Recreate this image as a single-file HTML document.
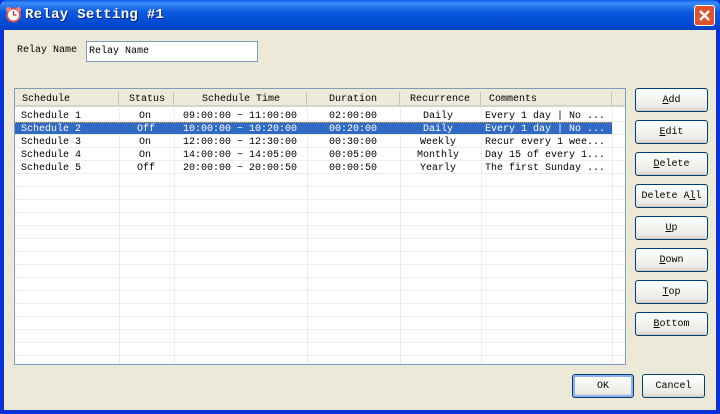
<!DOCTYPE html>
<html><head><style>
*{margin:0;padding:0;box-sizing:border-box}
body{width:720px;height:414px;overflow:hidden;background:#0831d9;font-family:"Liberation Mono",monospace;font-size:10px;color:#000;position:relative}
.title{position:absolute;left:0;top:0;width:720px;height:30px;background:linear-gradient(#0a5fe8 0%,#3d8cf7 10%,#0a5ae0 40%,#0048d0 85%,#0040c0 100%);border-radius:7px 7px 0 0}
.title span{position:absolute;left:25px;top:7px;color:#fff;font-weight:bold;font-size:14px;letter-spacing:0.3px;text-shadow:1px 1px #0a1e7a}
.close{position:absolute;left:694px;top:5px;width:21px;height:21px;background:#e0502a;border:1px solid #fff;border-radius:3px}
.client{position:absolute;left:4px;top:30px;width:712px;height:380px;background:#ECE9D8}
.a{position:absolute;white-space:nowrap}
.tb{position:absolute;left:86px;top:41px;width:172px;height:21px;border:1px solid #7f9db9;background:#fff;padding:4px 2px}
.list{position:absolute;left:14px;top:88px;width:612px;height:277px;border:1px solid #7f9db9;background:#fff;overflow:hidden}
.hdr{position:absolute;left:0;top:0;width:610px;height:18px;background:#ebeadb;border-bottom:2px solid #d6d3ce}
.btn{position:absolute;left:635px;width:73px;height:24px;border:1px solid #003c74;border-radius:3px;background:linear-gradient(#fff,#ecebe6 80%,#d6d0c5);text-align:center;line-height:23px;font-size:10px}
u{text-decoration:underline}
</style></head><body>
<div class="title"><svg style="position:absolute;left:5px;top:6px" width="17" height="17" viewBox="0 0 17 17"><circle cx="8.5" cy="9" r="6.5" fill="#fff" stroke="#e05050" stroke-width="2"/><circle cx="3.5" cy="3.5" r="2.5" fill="#f08080"/><circle cx="13.5" cy="3.5" r="2.5" fill="#f08080"/><path d="M8.5 5v4h3" stroke="#c03030" stroke-width="1.3" fill="none"/></svg><span>Relay Setting #1</span>
<div class="close"><svg width="19" height="19" viewBox="0 0 19 19"><path d="M5 5L14 14M14 5L5 14" stroke="#fff" stroke-width="2.3"/></svg></div></div>
<div class="client"></div>
<div class="a" style="left:17px;top:45px">Relay Name</div>
<div class="tb">Relay Name</div>
<div class="list">
<svg width="612" height="277" style="position:absolute;left:0;top:0">
<g stroke="#efeee4" stroke-width="1">
<line x1="0" y1="32.5" x2="610" y2="32.5"/><line x1="0" y1="45.5" x2="610" y2="45.5"/><line x1="0" y1="58.5" x2="610" y2="58.5"/><line x1="0" y1="71.5" x2="610" y2="71.5"/><line x1="0" y1="84.5" x2="610" y2="84.5"/><line x1="0" y1="97.5" x2="610" y2="97.5"/><line x1="0" y1="110.5" x2="610" y2="110.5"/><line x1="0" y1="123.5" x2="610" y2="123.5"/><line x1="0" y1="136.5" x2="610" y2="136.5"/><line x1="0" y1="149.5" x2="610" y2="149.5"/><line x1="0" y1="162.5" x2="610" y2="162.5"/><line x1="0" y1="175.5" x2="610" y2="175.5"/><line x1="0" y1="188.5" x2="610" y2="188.5"/><line x1="0" y1="201.5" x2="610" y2="201.5"/><line x1="0" y1="214.5" x2="610" y2="214.5"/><line x1="0" y1="227.5" x2="610" y2="227.5"/><line x1="0" y1="240.5" x2="610" y2="240.5"/><line x1="0" y1="253.5" x2="610" y2="253.5"/><line x1="0" y1="266.5" x2="610" y2="266.5"/>
<line x1="104.5" y1="19" x2="104.5" y2="277"/><line x1="159.5" y1="19" x2="159.5" y2="277"/><line x1="292.5" y1="19" x2="292.5" y2="277"/><line x1="385.5" y1="19" x2="385.5" y2="277"/><line x1="466.5" y1="19" x2="466.5" y2="277"/><line x1="597.5" y1="19" x2="597.5" y2="277"/>
</g>
<rect x="0" y="33" width="597" height="12" fill="#316ac5"/>
<line x1="0" y1="33.5" x2="597" y2="33.5" stroke="#e8a040" stroke-dasharray="1,1"/>
</svg>
<div class="hdr"></div>
<div class="a" style="left:7px;top:5px">Schedule</div>
<div class="a" style="left:114px;top:5px">Status</div>
<div class="a" style="left:187px;top:5px">Schedule Time</div>
<div class="a" style="left:314px;top:5px">Duration</div>
<div class="a" style="left:395px;top:5px">Recurrence</div>
<div class="a" style="left:474px;top:5px">Comments</div>
<div style="position:absolute;left:103px;top:3px;width:1px;height:13px;background:#c7c5b2"></div>
<div style="position:absolute;left:158px;top:3px;width:1px;height:13px;background:#c7c5b2"></div>
<div style="position:absolute;left:291px;top:3px;width:1px;height:13px;background:#c7c5b2"></div>
<div style="position:absolute;left:384px;top:3px;width:1px;height:13px;background:#c7c5b2"></div>
<div style="position:absolute;left:465px;top:3px;width:1px;height:13px;background:#c7c5b2"></div>
<div style="position:absolute;left:596px;top:3px;width:1px;height:13px;background:#c7c5b2"></div>
<div style="position:absolute;left:0;top:21px;width:610px;line-height:13px">
<div style="position:relative;height:13px"><span class="a" style="left:6px">Schedule 1</span><span class="a" style="left:124px">On</span><span class="a" style="left:168px">09:00:00 ~ 11:00:00</span><span class="a" style="left:314px">02:00:00</span><span class="a" style="left:408px">Daily</span><span class="a" style="left:470px">Every 1 day | No ...</span></div>
<div style="position:relative;height:13px;color:#fff"><span class="a" style="left:6px">Schedule 2</span><span class="a" style="left:122px">Off</span><span class="a" style="left:168px">10:00:00 ~ 10:20:00</span><span class="a" style="left:314px">00:20:00</span><span class="a" style="left:408px">Daily</span><span class="a" style="left:470px">Every 1 day | No ...</span></div>
<div style="position:relative;height:13px"><span class="a" style="left:6px">Schedule 3</span><span class="a" style="left:124px">On</span><span class="a" style="left:168px">12:00:00 ~ 12:30:00</span><span class="a" style="left:314px">00:30:00</span><span class="a" style="left:405px">Weekly</span><span class="a" style="left:470px">Recur every 1 wee...</span></div>
<div style="position:relative;height:13px"><span class="a" style="left:6px">Schedule 4</span><span class="a" style="left:124px">On</span><span class="a" style="left:168px">14:00:00 ~ 14:05:00</span><span class="a" style="left:314px">00:05:00</span><span class="a" style="left:402px">Monthly</span><span class="a" style="left:470px">Day 15 of every 1...</span></div>
<div style="position:relative;height:13px"><span class="a" style="left:6px">Schedule 5</span><span class="a" style="left:122px">Off</span><span class="a" style="left:168px">20:00:00 ~ 20:00:50</span><span class="a" style="left:314px">00:00:50</span><span class="a" style="left:405px">Yearly</span><span class="a" style="left:470px">The first Sunday ...</span></div>
</div>
</div>
<div class="btn" style="top:88px"><u>A</u>dd</div>
<div class="btn" style="top:120px"><u>E</u>dit</div>
<div class="btn" style="top:152px"><u>D</u>elete</div>
<div class="btn" style="top:184px">Delete A<u>l</u>l</div>
<div class="btn" style="top:216px"><u>U</u>p</div>
<div class="btn" style="top:248px"><u>D</u>own</div>
<div class="btn" style="top:280px"><u>T</u>op</div>
<div class="btn" style="top:312px"><u>B</u>ottom</div>
<div class="btn" style="left:572px;top:374px;width:62px;border-color:#003c74;box-shadow:inset 0 0 0 2px #8fb0ec">OK</div>
<div class="btn" style="left:642px;top:374px;width:63px">Cancel</div>
</body></html>
